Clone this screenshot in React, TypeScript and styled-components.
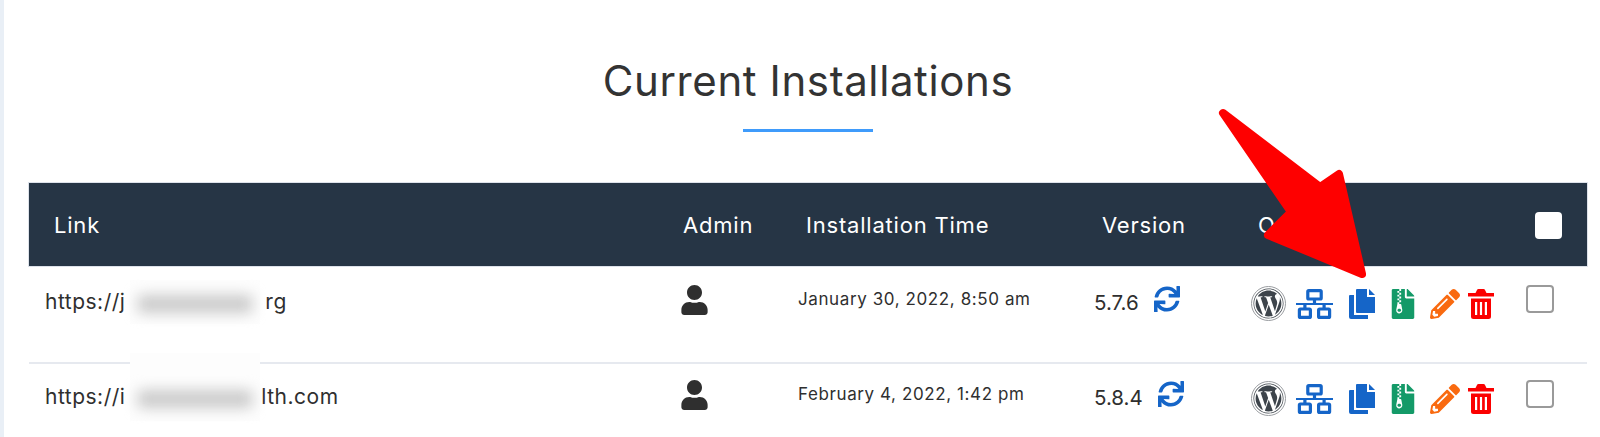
import styled, { createGlobalStyle } from "styled-components";
import {
  FaFileArchive,
  FaPencilAlt,
  FaSync,
  FaUser,
  FaWordpress,
} from "react-icons/fa";

const GlobalStyle = createGlobalStyle`
  html, body {
    margin: 0;
    padding: 0;
    background: #fff;
  }
  body {
    font-family: "Inter", "Liberation Sans", sans-serif;
    color: #2f2f2f;
  }
`;

const Page = styled.div`
  position: relative;
  width: 1600px;
  height: 437px;
  box-sizing: border-box;
  overflow: hidden;
  border-left: 4px solid #e9eff6;
  padding: 56px 13px 0 25px;
`;

const Title = styled.h1`
  margin: 0;
  text-align: center;
  font-size: 42px;
  line-height: 50px;
  font-weight: 400;
  letter-spacing: 0.6px;
  color: #333;
`;

const Underline = styled.div`
  width: 130px;
  height: 3px;
  margin: 23px auto 51px;
  background: #3f9bfb;
`;

const columns = "652px 117px 296px 157px 275px 1fr";

const HeaderRow = styled.div`
  display: grid;
  grid-template-columns: ${columns};
  align-items: center;
  height: 83px;
  background: #263545;
  box-shadow: 0 0 0 1px #dde2ea;
  color: #fff;
  font-size: 22px;
  letter-spacing: 0.8px;
`;

const HeaderCell = styled.div<{ $pad: number }>`
  padding-left: ${(p) => p.$pad}px;
`;

const HeaderCheck = styled.span`
  display: block;
  width: 27px;
  height: 27px;
  margin-top: 1px;
  border-radius: 4px;
  background: #fff;
`;

const Row = styled.div<{ $top: number; $line?: boolean }>`
  display: grid;
  grid-template-columns: ${columns};
  align-items: center;
  align-content: start;
  height: 98px;
  box-sizing: border-box;
  padding: ${(p) => p.$top}px 0 0;
  border-bottom: ${(p) => (p.$line ? "2px solid #e6e9ef" : "0")};
`;

const LinkCell = styled.div`
  padding-left: 16px;
  margin-top: -2px;
  font-size: 21px;
  letter-spacing: 0.5px;
  line-height: 35px;
  white-space: nowrap;
`;

const Blur = styled.span<{ $up: number; $tall: number; $wide: number }>`
  position: relative;
  display: inline-block;
  width: ${(p) => p.$wide}px;
  height: 1px;
  margin-left: 5px;
  &::before {
    content: "";
    position: absolute;
    left: 0;
    top: ${(p) => -p.$up}px;
    width: 130px;
    height: ${(p) => p.$tall}px;
    background: #fdfdfd;
  }
  &::after {
    content: "";
    position: absolute;
    left: 8px;
    bottom: -4px;
    width: 114px;
    height: 18px;
    background: #cacaca;
    filter: blur(7px);
  }
`;

const AdminCell = styled.div`
  color: #2f2f2f;
  line-height: 0;
  margin-top: -5px;
  svg {
    width: 27px;
    height: 30px;
  }
`;

const DateCell = styled.div`
  font-size: 17px;
  letter-spacing: 0.6px;
  line-height: 35px;
  margin-top: -7px;
`;

const VersionCell = styled.div`
  display: flex;
  align-items: center;
  gap: 15px;
  font-size: 20.5px;
  line-height: 35px;
  margin-top: -1px;
  svg {
    color: #1565c8;
    width: 26px;
    height: 26px;
    margin-top: -6px;
  }
`;

const Icons = styled.div`
  display: flex;
  align-items: center;
  line-height: 0;
  margin-top: 2px;
`;

const Tool = styled.span<{ $color: string; $gap?: number }>`
  display: inline-flex;
  color: ${(p) => p.$color};
  margin-left: ${(p) => p.$gap ?? 0}px;
  svg {
    height: 30px;
    width: auto;
    fill: currentColor;
  }
`;

const WpBadge = styled.span`
  display: inline-flex;
  align-items: center;
  justify-content: center;
  width: 35px;
  height: 35px;
  box-sizing: border-box;
  border: 1.5px solid #9a9da1;
  border-radius: 50%;
  color: #3d444b;
  font-size: 31px;
`;

const RowCheck = styled.span`
  display: block;
  width: 28px;
  height: 28px;
  box-sizing: border-box;
  margin-top: -7px;
  border: 2px solid #9a9a9a;
  border-radius: 4px;
  background: #fff;
`;

const Arrow = styled.svg`
  position: absolute;
  left: -4px;
  top: 0;
  width: 1600px;
  height: 437px;
  pointer-events: none;
`;

function SitemapIcon() {
  return (
    <svg viewBox="0 0 37 30">
      <g fill="none" stroke="currentColor" strokeWidth="3.2" strokeLinejoin="round">
        <rect x="11.8" y="1.6" width="13.4" height="8.4" rx="1" />
        <rect x="3.4" y="20" width="11" height="8.4" rx="1" />
        <rect x="22.6" y="20" width="11" height="8.4" rx="1" />
        <path d="M18.5 10v5M8.9 15v5M28.1 15v5" />
        <path d="M0 15h37" strokeWidth="2" />
      </g>
    </svg>
  );
}

function CopyIcon() {
  return (
    <svg viewBox="0 0 26 30">
      <path d="M8 0H18V8H26V24H8Q7 24 7 23V1Q7 0 8 0Z" />
      <path d="M20 0L26 6H20Z" />
      <path d="M1 6H5V26H19V30H2Q0 30 0 28V7Q0 6 1 6Z" />
    </svg>
  );
}

function TrashIcon() {
  return (
    <svg viewBox="0 0 26 30">
      <path d="M0 4H7.5L9 1Q9.3 0 10.5 0H15.5Q16.7 0 17 1L18.5 4H26V7.5H0Z" />
      <path
        fillRule="evenodd"
        d="M3 9.5H23V27.5Q23 30 20.5 30H5.5Q3 30 3 27.5ZM7 13V26H9.2V13ZM11.9 13V26H14.1V13ZM16.8 13V26H19V13Z"
      />
    </svg>
  );
}

interface Install {
  before: string;
  after: string;
  date: string;
  version: string;
  top: number;
  up: number;
  tall: number;
  wide: number;
  line?: boolean;
}

const installs: Install[] = [
  {
    before: "https://j",
    after: "rg",
    date: "January 30, 2022, 8:50 am",
    version: "5.7.6",
    top: 18,
    up: 28,
    tall: 44,
    wide: 135,
    line: true,
  },
  {
    before: "https://i",
    after: "lth.com",
    date: "February 4, 2022, 1:42 pm",
    version: "5.8.4",
    top: 15,
    up: 50,
    tall: 68,
    wide: 131,
  },
];

function App() {
  return (
    <Page>
      <GlobalStyle />
      <Title>Current Installations</Title>
      <Underline />
      <HeaderRow>
        <HeaderCell $pad={25}>Link</HeaderCell>
        <HeaderCell $pad={2}>Admin</HeaderCell>
        <HeaderCell $pad={8}>Installation Time</HeaderCell>
        <HeaderCell $pad={8}>Version</HeaderCell>
        <HeaderCell $pad={7}>Options</HeaderCell>
        <HeaderCell $pad={9}>
          <HeaderCheck />
        </HeaderCell>
      </HeaderRow>
      {installs.map((item) => (
        <Row key={item.version} $top={item.top} $line={item.line}>
          <LinkCell>
            {item.before}
            <Blur $up={item.up} $tall={item.tall} $wide={item.wide} />
            {item.after}
          </LinkCell>
          <AdminCell>
            <FaUser />
          </AdminCell>
          <DateCell>{item.date}</DateCell>
          <VersionCell>
            {item.version}
            <FaSync />
          </VersionCell>
          <Icons>
            <WpBadge>
              <FaWordpress />
            </WpBadge>
            <Tool $color="#1565c8" $gap={10}>
              <SitemapIcon />
            </Tool>
            <Tool $color="#1565c8" $gap={16}>
              <CopyIcon />
            </Tool>
            <Tool $color="#149a68" $gap={13}>
              <FaFileArchive />
            </Tool>
            <Tool $color="#f96a10" $gap={12}>
              <FaPencilAlt />
            </Tool>
            <Tool $color="#fb0000" $gap={8}>
              <TrashIcon />
            </Tool>
          </Icons>
          <RowCheck />
        </Row>
      ))}
      <Arrow viewBox="0 0 1600 437">
        <polygon
          points="1223,113 1320,187 1339,174 1362,274 1268,235 1291,212"
          fill="#fe0000"
          stroke="#fe0000"
          strokeWidth="8"
          strokeLinejoin="round"
        />
      </Arrow>
    </Page>
  );
}

export default App;
